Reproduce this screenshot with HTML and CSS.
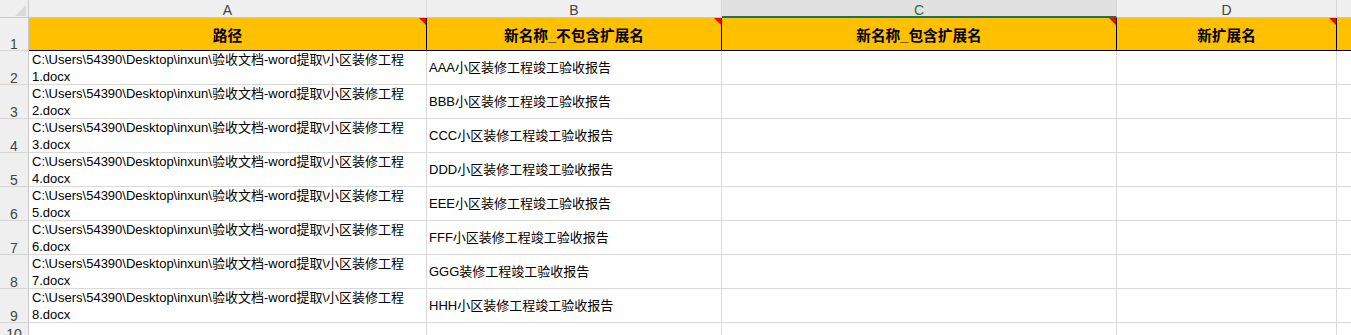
FILE: index.html
```html
<!DOCTYPE html>
<html lang="zh">
<head>
<meta charset="utf-8">
<title>Sheet</title>
<link rel="stylesheet" href="styles.css">
</head>
<body>
<div class="sheet">
  <div class="corner"><span class="corner-tri"></span></div>
  <div class="colhead">A</div>
  <div class="colhead">B</div>
  <div class="colhead sel">C</div>
  <div class="colhead">D</div>
  <div class="colhead last"></div>

  <div class="rowhead">1</div>
  <div class="hd note">路径</div>
  <div class="hd note">新名称_不包含扩展名</div>
  <div class="hd note">新名称_包含扩展名</div>
  <div class="hd note">新扩展名</div>
  <div class="hd last"></div>

  <div class="rowhead">2</div>
  <div class="cell path">C:\Users\54390\Desktop\inxun\验收文档-word提取\小区装修工程<br>1.docx</div>
  <div class="cell name">AAA小区装修工程竣工验收报告</div>
  <div class="cell"></div><div class="cell"></div><div class="cell last"></div>

  <div class="rowhead">3</div>
  <div class="cell path">C:\Users\54390\Desktop\inxun\验收文档-word提取\小区装修工程<br>2.docx</div>
  <div class="cell name">BBB小区装修工程竣工验收报告</div>
  <div class="cell"></div><div class="cell"></div><div class="cell last"></div>

  <div class="rowhead">4</div>
  <div class="cell path">C:\Users\54390\Desktop\inxun\验收文档-word提取\小区装修工程<br>3.docx</div>
  <div class="cell name">CCC小区装修工程竣工验收报告</div>
  <div class="cell"></div><div class="cell"></div><div class="cell last"></div>

  <div class="rowhead">5</div>
  <div class="cell path">C:\Users\54390\Desktop\inxun\验收文档-word提取\小区装修工程<br>4.docx</div>
  <div class="cell name">DDD小区装修工程竣工验收报告</div>
  <div class="cell"></div><div class="cell"></div><div class="cell last"></div>

  <div class="rowhead">6</div>
  <div class="cell path">C:\Users\54390\Desktop\inxun\验收文档-word提取\小区装修工程<br>5.docx</div>
  <div class="cell name">EEE小区装修工程竣工验收报告</div>
  <div class="cell"></div><div class="cell"></div><div class="cell last"></div>

  <div class="rowhead">7</div>
  <div class="cell path">C:\Users\54390\Desktop\inxun\验收文档-word提取\小区装修工程<br>6.docx</div>
  <div class="cell name">FFF小区装修工程竣工验收报告</div>
  <div class="cell"></div><div class="cell"></div><div class="cell last"></div>

  <div class="rowhead">8</div>
  <div class="cell path">C:\Users\54390\Desktop\inxun\验收文档-word提取\小区装修工程<br>7.docx</div>
  <div class="cell name">GGG装修工程竣工验收报告</div>
  <div class="cell"></div><div class="cell"></div><div class="cell last"></div>

  <div class="rowhead">9</div>
  <div class="cell path">C:\Users\54390\Desktop\inxun\验收文档-word提取\小区装修工程<br>8.docx</div>
  <div class="cell name">HHH小区装修工程竣工验收报告</div>
  <div class="cell"></div><div class="cell"></div><div class="cell last"></div>

  <div class="rowhead">10</div>
  <div class="cell"></div><div class="cell"></div><div class="cell"></div><div class="cell"></div><div class="cell last"></div>
</div>
</body>
</html>
```

FILE: styles.css
```css
html, body {
  margin: 0;
  padding: 0;
  background: #ffffff;
  overflow: hidden;
}

body {
  font-family: "Liberation Sans", "Noto Sans CJK SC", sans-serif;
  color: #000;
}

.sheet {
  display: grid;
  grid-template-columns: 29px 398px 295px 395px 220px 1fr;
  grid-template-rows: 18px 33px repeat(8, 34px) 18px;
  width: 1351px;
}

.sheet > div {
  box-sizing: border-box;
  overflow: hidden;
  white-space: nowrap;
}

.corner {
  background: #efefef;
  border-right: 1px solid #c8c8c8;
  border-bottom: 1px solid #c8c8c8;
  position: relative;
}

.corner-tri {
  position: absolute;
  right: 2px;
  bottom: 1px;
  width: 0;
  height: 0;
  border-left: 11px solid transparent;
  border-bottom: 11px solid #dadada;
}

.colhead {
  background: #efefef;
  border-right: 1px solid #d6d6d6;
  border-bottom: 1px solid #c8c8c8;
  color: #444;
  font-size: 14px;
  line-height: 17px;
  padding-top: 2px;
  text-align: center;
}

.colhead.sel {
  background: #e1e1e1;
  color: #217346;
  border-bottom: 2px solid #217346;
}

.colhead.last {
  border-right: none;
}

.rowhead {
  background: #efefef;
  border-right: 1px solid #c8c8c8;
  border-bottom: 1px solid #d6d6d6;
  color: #444;
  font-size: 14px;
  line-height: 12px;
  display: flex;
  align-items: flex-end;
  justify-content: center;
}

.hd {
  background: #ffc000;
  border-right: 1px solid #000;
  border-bottom: 1px solid #000;
  font-weight: bold;
  font-size: 14.67px;
  line-height: 18px;
  display: flex;
  align-items: center;
  justify-content: center;
  padding-top: 3px;
  position: relative;
}

.hd.last {
  border-right: none;
}

.hd.note::after {
  content: "";
  position: absolute;
  top: 0;
  right: 0;
  width: 0;
  height: 0;
  border-top: 7px solid #ff0000;
  border-left: 7px solid transparent;
}

.cell {
  border-right: 1px solid #dadada;
  border-bottom: 1px solid #dadada;
  font-size: 13px;
  line-height: 17px;
}

.cell.last {
  border-right: none;
}

.cell.path {
  padding-left: 3px;
}

.cell.name {
  padding-left: 2px;
  display: flex;
  align-items: center;
}
```
